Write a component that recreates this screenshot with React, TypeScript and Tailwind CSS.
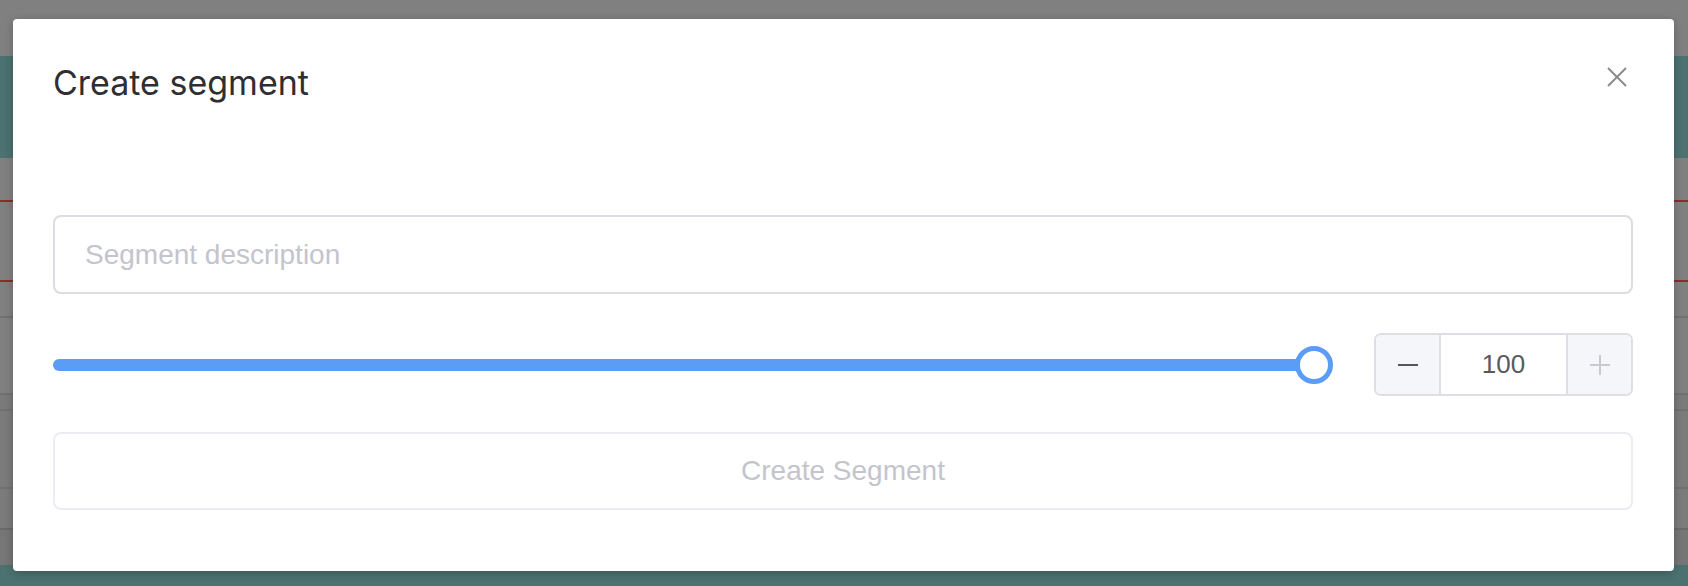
import React from "react";

function Background() {
  return (
    <div className="flex h-[586px] w-full flex-col bg-[#808080]">
      <div className="h-[56px] shrink-0" />
      <div className="h-[102px] shrink-0 bg-[#4b7270]" />
      <div className="h-[42px] shrink-0" />
      <div className="h-[2px] shrink-0 bg-[#8e2b2b]" />
      <div className="h-[78px] shrink-0" />
      <div className="h-[2px] shrink-0 bg-[#8e2b2b]" />
      <div className="h-[34px] shrink-0" />
      <div className="h-[2px] shrink-0 bg-[#717171]" />
      <div className="h-[75px] shrink-0" />
      <div className="h-[2px] shrink-0 bg-[#717171]" />
      <div className="h-[14px] shrink-0 bg-[#7a7a7a]" />
      <div className="h-[2px] shrink-0 bg-[#717171]" />
      <div className="h-[76px] shrink-0 bg-[#7b7b7b]" />
      <div className="h-[2px] shrink-0 bg-[#717171]" />
      <div className="h-[39px] shrink-0 bg-[#7b7b7b]" />
      <div className="h-[2px] shrink-0 bg-[#6a6a6a]" />
      <div className="h-[35px] shrink-0 bg-[#767676]" />
      <div className="flex-1 bg-[#4b7270]" />
    </div>
  );
}

function Slider() {
  return (
    <div className="relative h-[40px] flex-1">
      <div className="absolute left-0 right-[19px] top-1/2 h-[12px] -translate-y-1/2 rounded-full bg-[#5b9cf6]" />
      <div className="absolute right-0 top-1/2 h-[38px] w-[38px] -translate-y-1/2 rounded-full border-[5px] border-[#5b9cf6] bg-white" />
    </div>
  );
}

function Stepper() {
  return (
    <div className="flex h-[63px] w-[259px] shrink-0 overflow-hidden rounded-[7px] border-2 border-[#dedee4]">
      <div className="flex w-[65px] items-center justify-center border-r-2 border-[#dedee4] bg-[#f5f6fa]">
        <div className="h-[2px] w-[20px] bg-[#55555a]" />
      </div>
      <div className="flex flex-1 items-center justify-center bg-white text-[26px] text-[#5a5a5e] [font-family:'Liberation_Sans',Arial,sans-serif]">
        100
      </div>
      <div className="flex w-[65px] items-center justify-center border-l-2 border-[#dedee4] bg-[#f5f6fa]">
        <svg width="20" height="20" viewBox="0 0 20 20">
          <line x1="0" y1="10" x2="20" y2="10" stroke="#c9c9cf" strokeWidth="2" />
          <line x1="10" y1="0" x2="10" y2="20" stroke="#c9c9cf" strokeWidth="2" />
        </svg>
      </div>
    </div>
  );
}

export default function App() {
  return (
    <div className="relative h-[586px] w-full overflow-hidden">
      <Background />
      <div className="absolute inset-0 pl-[13px] pt-[19px]">
        <div className="relative flex h-[552px] w-[1661px] flex-col rounded-[4px] bg-white pl-[40px] pr-[41px] pt-[44px] shadow-[0_2px_8px_rgba(0,0,0,0.25)]">
          <h2 className="h-[40px] text-[34px] leading-[40px] text-[#2e2e33] [font-family:Inter,'Noto_Sans',sans-serif]">
            Create segment
          </h2>
          <button className="absolute right-[47px] top-[48px] h-[20px] w-[20px]">
            <svg width="20" height="20" viewBox="0 0 20 20">
              <line x1="1" y1="1" x2="19" y2="19" stroke="#8a8a90" strokeWidth="2" />
              <line x1="19" y1="1" x2="1" y2="19" stroke="#8a8a90" strokeWidth="2" />
            </svg>
          </button>
          <div className="mt-[112px] flex h-[79px] items-center rounded-[8px] border-2 border-[#dcdce2] px-[30px]">
            <input
              placeholder="Segment description"
              className="w-full bg-transparent text-[28px] text-[#333] outline-none placeholder:text-[#c4c4cc] [font-family:'Liberation_Sans',Arial,sans-serif]"
            />
          </div>
          <div className="mt-[39px] flex items-center gap-[41px]">
            <Slider />
            <Stepper />
          </div>
          <button className="mt-[36px] flex h-[78px] items-center justify-center rounded-[8px] border-2 border-[#ececf2] text-[28px] text-[#c4c4cc] [font-family:'Liberation_Sans',Arial,sans-serif]">
            Create Segment
          </button>
        </div>
      </div>
    </div>
  );
}
